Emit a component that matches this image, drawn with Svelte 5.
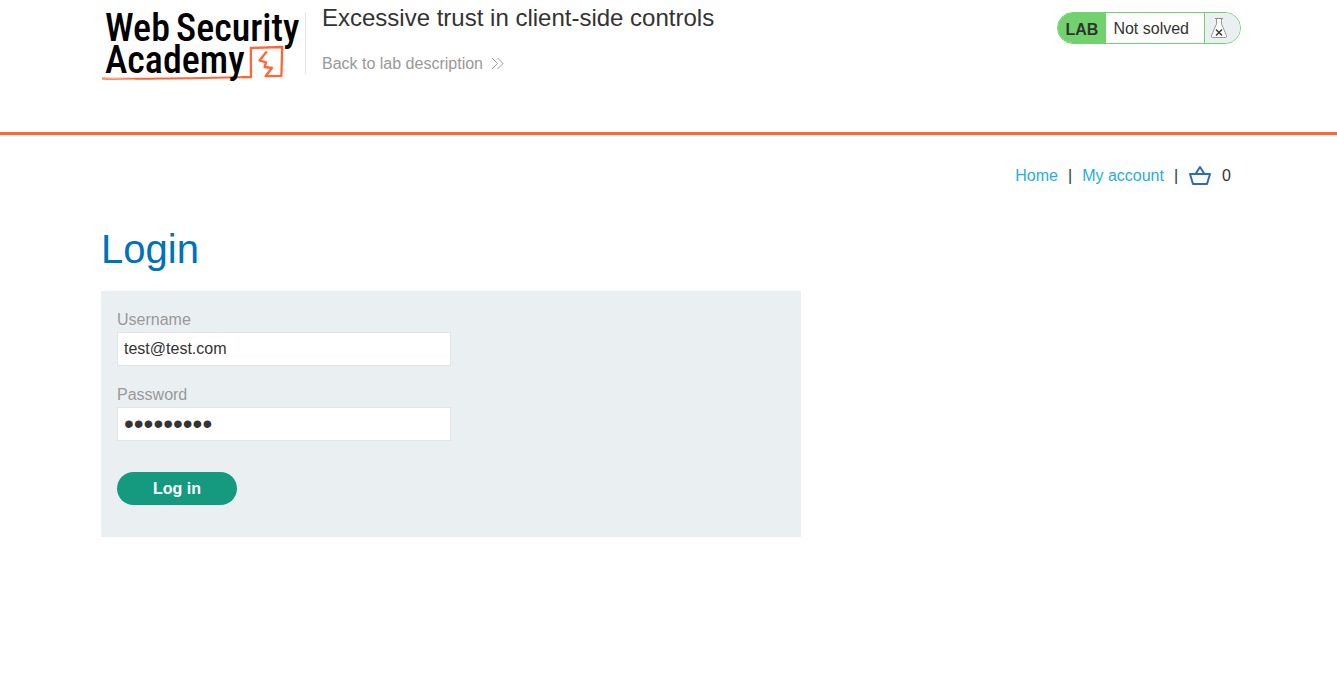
<script>
  let username = $state('test@test.com');
  let password = $state('password1');
  let basketCount = $state(0);
</script>

<header class="lab-header">
  <div class="container banner">
    <svg class="logo" viewBox="0 0 204 76" role="img" aria-label="Web Security Academy">
      <path d="M1 72.4 C30 73.6 65 72 90 72.2 L149 71" fill="none" stroke="#ff6633" stroke-width="2" />
      <path d="M1 72 L34 73.5" fill="none" stroke="#ffb299" stroke-width="1" />
      <path d="M141 71.2 L150 71 L149.8 42 L181.2 41 L180.4 69.8 L164.5 70.2 L171 62 L163.5 61 L165 56.4 L158.5 54.5 L165.8 45.5" fill="none" stroke="#ff6633" stroke-width="2.3" stroke-linejoin="round" />
      <g class="logo-text">
        <text x="4" y="35">Web</text>
        <text x="75" y="35">Security</text>
        <text x="4" y="67">Academy</text>
      </g>
    </svg>
    <div class="title">
      <h2>Excessive trust in client-side controls</h2>
      <a class="back" href="#lab">
        Back to lab description
        <svg width="14" height="14" viewBox="0 0 14 14" aria-hidden="true">
          <path d="M2 1 L7.5 6.5 L2 12 M7.5 1 L13 6.5 L7.5 12" fill="none" stroke="#999999" stroke-width="1" />
        </svg>
      </a>
    </div>
    <div class="status">
      <strong>LAB</strong>
      <span class="state">Not solved</span>
      <span class="flask">
        <svg width="18" height="22" viewBox="0 0 18 22" aria-hidden="true">
          <path d="M6.5 1.5 V7 L1.5 18.5 Q1 20.5 2.5 20.5 H15.5 Q17 20.5 16.5 18.5 L11.5 7 V1.5 Z" fill="#ffffff" stroke="#999999" />
          <path d="M5 1.5 H13" fill="none" stroke="#888888" />
          <path d="M6 12.5 L12 18.5 M12 12.5 L6 18.5" fill="none" stroke="#333332" stroke-width="1.4" />
        </svg>
      </span>
    </div>
  </div>
</header>

<main class="container">
  <nav>
    <a href="#home">Home</a>
    <span>|</span>
    <a href="#account">My account</a>
    <span>|</span>
    <a class="basket" href="#cart" aria-label="Basket">
      <svg width="24" height="22" viewBox="0 0 24 22" aria-hidden="true">
        <path d="M2 9 H22 L19 19 H5 Z M7.5 9 L12 2 L16.5 9" fill="none" stroke="#2a6db8" stroke-width="2" stroke-linejoin="round" />
      </svg>
    </a>
    <span>{basketCount}</span>
  </nav>

  <h1>Login</h1>
  <form onsubmit={(event) => event.preventDefault()}>
    <label for="username">Username</label>
    <input id="username" type="text" bind:value={username} />
    <label for="password">Password</label>
    <input id="password" type="password" bind:value={password} />
    <button type="submit">Log in</button>
  </form>
</main>

<style>
  :global(body) {
    margin: 0;
    background: #ffffff;
    color: #333332;
    font: 16px/24px "Liberation Sans", Arial, sans-serif;
  }

  .container {
    box-sizing: border-box;
    max-width: 1145px;
    margin: 0 auto;
    padding-left: 5px;
  }

  a {
    color: #29abe2;
    text-decoration: none;
  }

  .lab-header {
    border-bottom: 3px solid #ff6633;
  }

  .banner {
    display: flex;
    align-items: flex-start;
    min-height: 132px;
  }

  .logo {
    flex: none;
    width: 204px;
    height: 76px;
    margin-top: 6px;
    overflow: visible;
  }

  .logo-text {
    fill: #000000;
    font-family: "Roboto Condensed", "Liberation Sans Narrow", Roboto, sans-serif;
    font-size: 38px;
    font-weight: 500;
  }

  .title {
    flex: 1;
    margin-top: 12px;
    padding-left: 16px;
    height: 62px;
    border-left: 1px solid #e4e4e4;
  }

  h2 {
    margin: -8px 0 20px;
    font-size: 24px;
    line-height: 28px;
    font-weight: 400;
  }

  .back {
    display: flex;
    align-items: center;
    gap: 7px;
    line-height: 24px;
    color: #999999;
  }

  .status {
    box-sizing: border-box;
    display: flex;
    height: 32px;
    margin-top: 12px;
    overflow: hidden;
    border: 1px solid #71d26d;
    border-radius: 16px;
    line-height: 32px;
  }

  .status strong {
    padding: 1px 8px 0;
    background: #71d26d;
  }

  .state {
    padding: 0 15px 0 7px;
  }

  .flask {
    width: 30px;
    padding: 4px 0 0 5px;
    border-left: 1px solid #71d26d;
    background: #eaeff2;
    line-height: 0;
  }

  nav {
    display: flex;
    justify-content: flex-end;
    align-items: center;
    gap: 10px;
    padding: 29px 10px 0 0;
  }

  .basket {
    display: flex;
  }

  h1 {
    margin: 37px 0 18px;
    color: #0071bc;
    font-size: 40px;
    line-height: 48px;
    font-weight: 400;
  }

  form {
    box-sizing: border-box;
    display: flex;
    flex-direction: column;
    align-items: flex-start;
    max-width: 700px;
    padding: 16px 16px 32px;
    background: #eaeff2;
  }

  label {
    color: #999999;
    line-height: 25px;
  }

  input {
    box-sizing: border-box;
    width: 50%;
    height: 34px;
    margin: 0 0 16px;
    padding: 0 6px;
    border: 1px solid #e4e4e4;
    border-radius: 0;
    background: #ffffff;
    color: #333332;
    font: inherit;
    outline: none;
  }

  input[type='password'] {
    font-size: 28px;
  }

  button {
    width: 120px;
    height: 33px;
    margin-top: 15px;
    padding: 0;
    border: 0;
    border-radius: 17px;
    background: #159a80;
    color: #ffffff;
    font: inherit;
    font-weight: 700;
    cursor: pointer;
  }
</style>
